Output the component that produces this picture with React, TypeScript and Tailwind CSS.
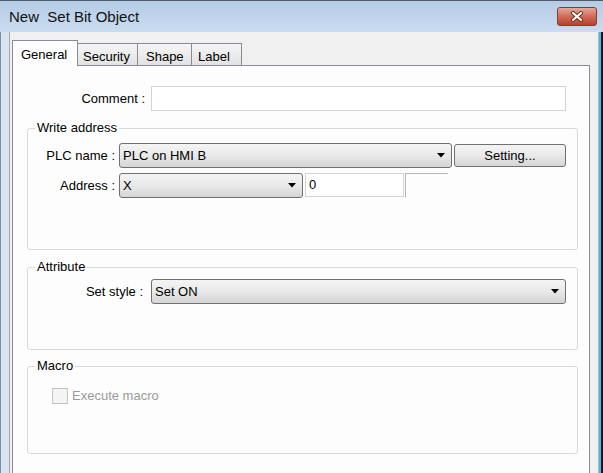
import React from "react";

const FONT = { fontFamily: '"Liberation Sans", Arial, sans-serif' };

function Arrow() {
  return (
    <svg width="8" height="5" viewBox="0 0 8 5" className="shrink-0">
      <path d="M0 0 H8 L4 4.5 Z" fill="#000" />
    </svg>
  );
}

function Combo({ text, className }: { text: string; className: string }) {
  return (
    <div
      className={`flex items-center justify-between h-[25px] border border-[#707070] rounded-[3px] bg-gradient-to-b from-[#f4f4f4] via-[#e9e9e9] to-[#d5d5d5] pl-[3px] pr-[6px] text-[13px] text-black ${className}`}
    >
      <span>{text}</span>
      <Arrow />
    </div>
  );
}

function Group({
  title,
  className,
  children,
}: {
  title: string;
  className: string;
  children?: React.ReactNode;
}) {
  return (
    <div className={`relative border border-[#dadada] rounded-[3px] ${className}`}>
      <span className="absolute left-[7px] top-[-9px] px-[2px] bg-[#fdfdfd] text-[13px] leading-[16px] text-black">
        {title}
      </span>
      {children}
    </div>
  );
}

export default function App() {
  return (
    <div
      className="w-[603px] h-[473px] overflow-hidden flex flex-col bg-[#d4e2f0]"
      style={FONT}
    >
      {/* Title bar */}
      <div className="h-[32px] shrink-0 flex items-start border-t border-[#4d5b6b] bg-gradient-to-b from-[#b4cce6] to-[#cbdcef] pl-[9px] pr-[6px]">
        <div className="flex-1 pt-[7px] text-[15px] leading-[18px] text-[#111] whitespace-pre">
          New  Set Bit Object
        </div>
        <div className="mt-[6px] w-[40px] h-[19px] rounded-[3px] border border-[#8a3a2e] bg-gradient-to-b from-[#e6a89c] via-[#cf6b58] to-[#b9412b] flex items-center justify-center">
          <svg width="14" height="11" viewBox="0 0 14 11">
            <path d="M3 2 L11 9 M11 2 L3 9" stroke="#6b2a20" strokeWidth="4" strokeLinecap="round" />
            <path d="M3 2 L11 9 M11 2 L3 9" stroke="#ffffff" strokeWidth="2.2" strokeLinecap="round" />
          </svg>
        </div>
      </div>

      {/* Body */}
      <div className="flex-1 flex min-h-0">
        <div className="w-[9px] shrink-0 border-l border-[#7f90a3] bg-[#d9e5f1]" />
        <div className="flex-1 flex flex-col bg-[#f0f0f0] border-l border-[#a3a8ae] pl-[2px] pr-[8px] pt-[8px] min-w-0">
          {/* Tabs */}
          <div className="h-[25px] shrink-0 flex items-end text-[13px] text-black">
            <div className="relative z-10 -mb-px h-[26px] w-[66px] border border-b-0 border-[#898c95] bg-[#fdfdfd] pl-[8px] pt-[4px]">
              General
            </div>
            <div className="-ml-px h-[22px] w-[61px] border border-b-0 border-[#898c95] bg-gradient-to-b from-[#f5f5f5] to-[#e2e2e2] pl-[5px] pt-[3px]">
              Security
            </div>
            <div className="-ml-px h-[22px] w-[55px] border border-b-0 border-[#898c95] bg-gradient-to-b from-[#f5f5f5] to-[#e2e2e2] pl-[8px] pt-[3px]">
              Shape
            </div>
            <div className="-ml-px h-[22px] w-[51px] border border-b-0 border-[#898c95] bg-gradient-to-b from-[#f5f5f5] to-[#e2e2e2] pl-[6px] pt-[3px]">
              Label
            </div>
          </div>

          {/* Panel */}
          <div className="flex-1 border border-b-0 border-[#898c95] bg-[#fdfdfd] pl-[14px] pr-[11px] pt-[20px] text-[13px] text-black">
            {/* Comment */}
            <div className="flex items-center h-[25px]">
              <div className="w-[118px] text-right">Comment :</div>
              <div className="ml-[6px] w-[415px] h-[25px] border border-[#d3d3d3] bg-white" />
            </div>

            {/* Write address */}
            <Group title="Write address" className="mt-[17px] h-[122px] pt-[14px]">
              <div className="flex items-center h-[25px]">
                <div className="w-[87px] text-right">PLC name :</div>
                <Combo text="PLC on HMI B" className="ml-[4px] w-[333px]" />
                <div className="ml-[2px] w-[112px] h-[23px] border border-[#707070] rounded-[3px] bg-gradient-to-b from-[#f4f4f4] via-[#e9e9e9] to-[#d5d5d5] flex items-center justify-center">
                  Setting...
                </div>
              </div>
              <div className="mt-[5px] flex items-start h-[25px]">
                <div className="w-[87px] text-right leading-[25px]">Address :</div>
                <Combo text="X" className="ml-[4px] w-[184px]" />
                <div className="ml-[2px] w-[99px] h-[24px] border border-[#d3d3d3] bg-white pl-[3px] leading-[22px]">
                  0
                </div>
                <div className="ml-[1px] w-[43px] h-[24px] border-t border-l border-[#b8b8b8]" />
              </div>
            </Group>

            {/* Attribute */}
            <Group title="Attribute" className="mt-[17px] h-[83px] pt-[11px]">
              <div className="flex items-center h-[25px]">
                <div className="w-[115px] text-right">Set style :</div>
                <Combo text="Set ON" className="ml-[8px] w-[415px]" />
              </div>
            </Group>

            {/* Macro */}
            <Group title="Macro" className="mt-[16px] h-[88px] pt-[21px] pl-[24px]">
              <div className="flex items-center h-[16px]">
                <div className="w-[16px] h-[16px] border border-[#c2c2c2] bg-[#f4f4f4]" />
                <span className="ml-[4px] text-[#9a9a9a]">Execute macro</span>
              </div>
            </Group>
          </div>
        </div>
        <div className="w-[5px] shrink-0 flex">
          <div className="w-[1px] bg-[#b5b5b5]" />
          <div className="w-[2px] bg-[#52b4e6]" />
          <div className="w-[2px] bg-[#1b1b1b]" />
        </div>
      </div>
    </div>
  );
}
